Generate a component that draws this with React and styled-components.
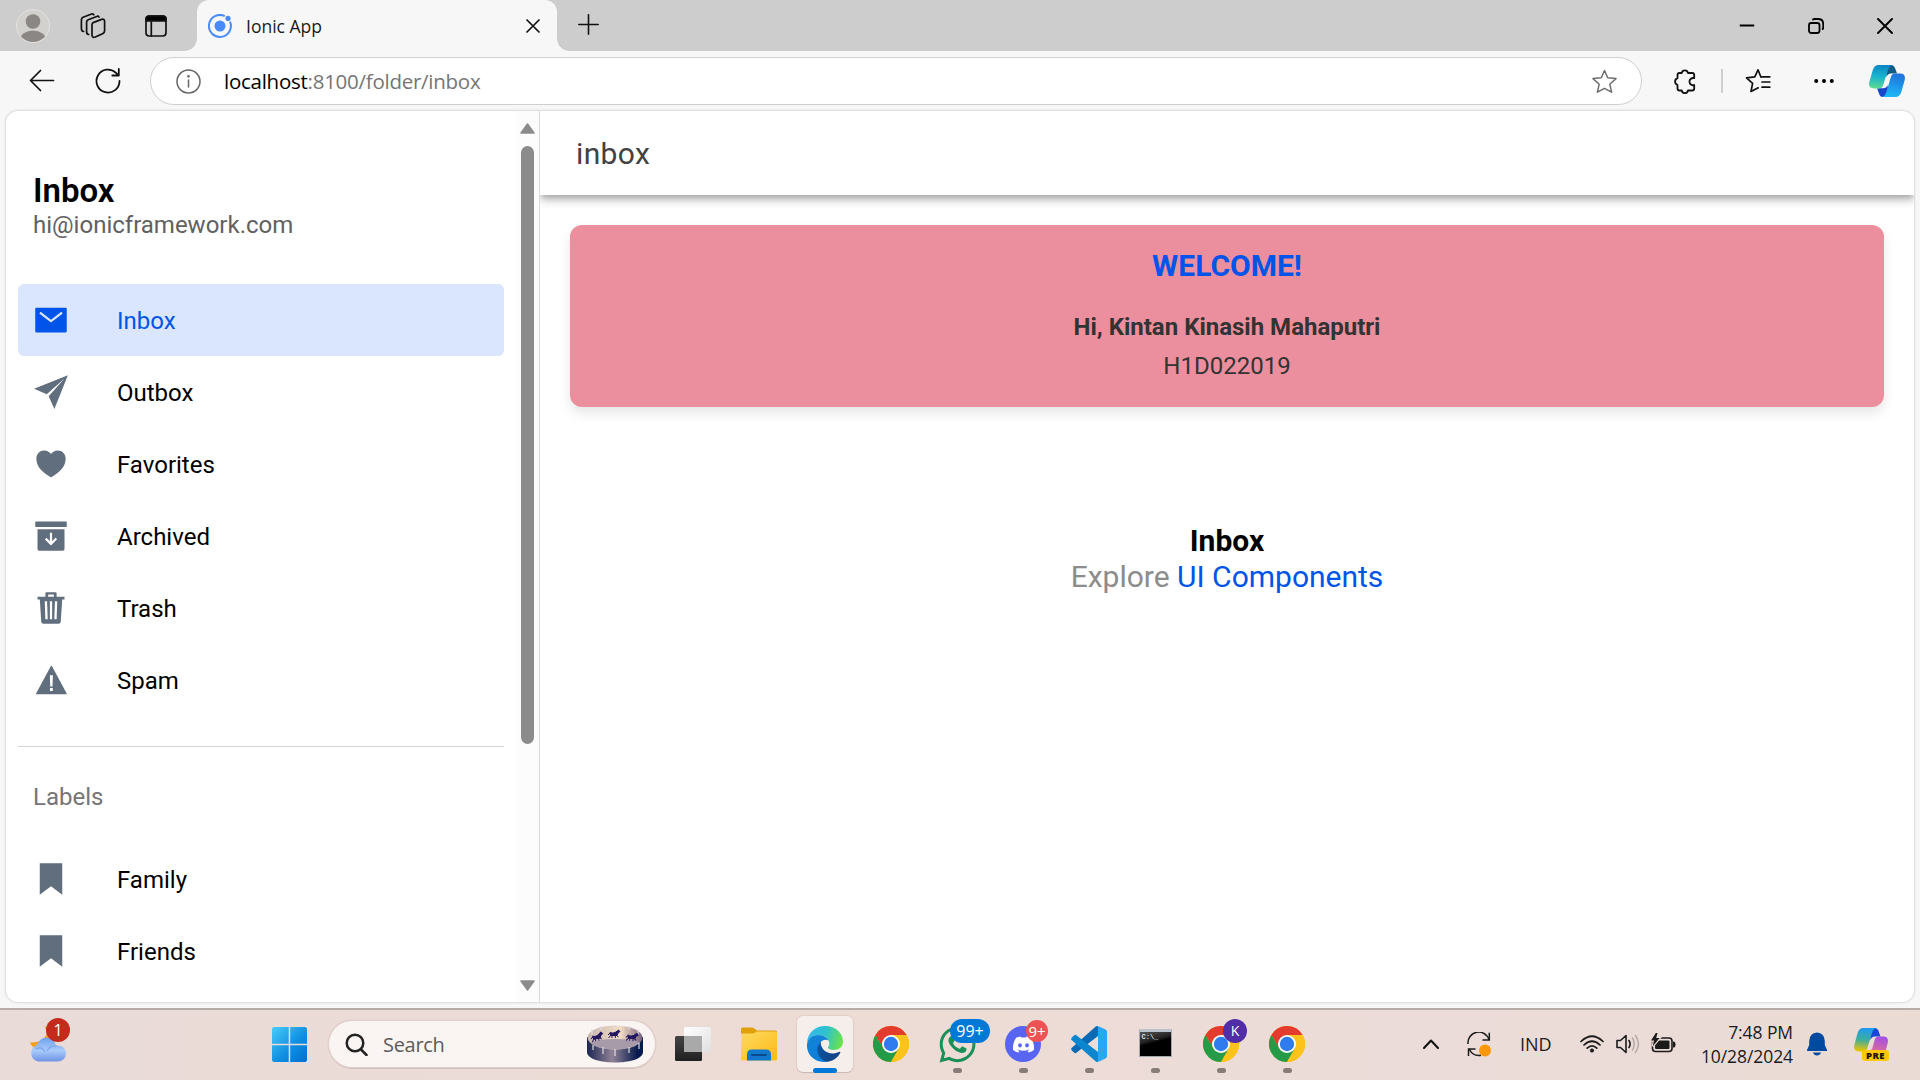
import React from "react";
import styled, { createGlobalStyle, css } from "styled-components";
import {
  IoMailSharp,
  IoPaperPlaneSharp,
  IoHeartSharp,
  IoArchiveSharp,
  IoTrashSharp,
  IoWarningSharp,
  IoBookmarkSharp,
} from "react-icons/io5";
import { FaDiscord, FaWhatsapp } from "react-icons/fa";

const segoe = css`
  font-family: "Open Sans", "Noto Sans", sans-serif;
`;

const GlobalStyle = createGlobalStyle`
  * { box-sizing: border-box; }
  body { margin: 0; overflow: hidden; background: #f7f7f7; font-family: Roboto, sans-serif; }
  h1, h2, p { margin: 0; }
  svg { display: block; flex: none; }
`;

const Screen = styled.div`
  width: 1920px;
  height: 1080px;
  display: flex;
  flex-direction: column;
  overflow: hidden;
`;

/* ---------- Browser chrome ---------- */

const TabStrip = styled.header`
  height: 51px;
  flex: none;
  display: flex;
  background: #cdcdcd;
`;

const StripTools = styled.div`
  width: 197px;
  display: flex;
  align-items: center;
  padding-left: 16px;
`;

const Tab = styled.div`
  position: relative;
  width: 360px;
  height: 51px;
  display: flex;
  align-items: center;
  padding: 0 17px 0 11px;
  background: #f7f7f7;
  border-radius: 12px 12px 0 0;
  &::before,
  &::after {
    content: "";
    position: absolute;
    bottom: 0;
    width: 12px;
    height: 12px;
  }
  &::before {
    left: -12px;
    background: radial-gradient(circle at 0 0, transparent 11.5px, #f7f7f7 12px);
  }
  &::after {
    right: -12px;
    background: radial-gradient(circle at 100% 0, transparent 11.5px, #f7f7f7 12px);
  }
`;

const TabTitle = styled.span`
  ${segoe}
  flex: 1;
  margin-left: 14px;
  font-size: 17.5px;
  letter-spacing: 0;
  color: #1b1b1b;
`;

const NewTab = styled.div`
  display: flex;
  align-items: center;
  margin-left: 21px;
  padding-bottom: 2px;
`;

const WindowControls = styled.div`
  display: flex;
  align-items: center;
  gap: 53px;
  margin-left: auto;
  padding-right: 27px;
`;

const Toolbar = styled.div`
  height: 60px;
  flex: none;
  display: flex;
  align-items: center;
  padding-left: 28px;
  background: #f7f7f7;
`;

const NavButtons = styled.div`
  width: 122px;
  display: flex;
  align-items: center;
  gap: 38px;
`;

const AddressBar = styled.div`
  width: 1492px;
  height: 48px;
  display: flex;
  align-items: center;
  padding: 0 24px 0 25px;
  background: #fff;
  border: 1.5px solid #cfcfcf;
  border-radius: 24px;
`;

const Url = styled.span`
  ${segoe}
  flex: 1;
  margin-left: 23px;
  font-size: 20.5px;
  letter-spacing: -0.26px;
  color: #757575;
  b { font-weight: 400; color: #000; }
`;

const ToolbarActions = styled.div`
  flex: 1;
  display: flex;
  align-items: center;
  padding-left: 30px;
`;

const Separator = styled.i`
  width: 2px;
  height: 24px;
  margin: 0 22px 0 24px;
  background: #cfcfcf;
`;

const Gap = styled.i`
  width: ${(p) => p.$w}px;
  flex: none;
`;

/* ---------- Web page ---------- */

const PageFrame = styled.div`
  height: 897px;
  flex: none;
  padding: 0 6px 6px;
  background: #f7f7f7;
`;

const Page = styled.div`
  height: 891px;
  display: flex;
  overflow: hidden;
  background: #fff;
  border-radius: 12px;
  box-shadow: 0 0 2px 1px rgba(0, 0, 0, 0.12);
`;

const Sidebar = styled.aside`
  width: 534px;
  flex: none;
  display: flex;
  border-right: 1px solid #dadada;
`;

const Menu = styled.nav`
  flex: 1;
  padding: 60px 12px 0;
`;

const MenuTitle = styled.h1`
  padding-left: 15px;
  font-size: 33px;
  line-height: 39px;
  font-weight: 600;
  color: #000;
`;

const MenuNote = styled.p`
  height: 74px;
  padding-left: 15px;
  font-size: 24px;
  line-height: 30px;
  color: #616161;
`;

const MenuGroup = styled.div`
  height: ${(p) => p.$height}px;
  border-bottom: ${(p) => (p.$divided ? "1px solid #d5d5d5" : "none")};
`;

const MenuItem = styled.div`
  height: 72px;
  display: flex;
  align-items: center;
  gap: 48px;
  padding-left: 15px;
  border-radius: 6px;
  font-size: 24px;
  line-height: 30px;
  color: ${(p) => (p.$selected ? "#0054e9" : "#000")};
  background: ${(p) => (p.$selected ? "#dae6fd" : "transparent")};
  svg { width: 36px; height: 36px; color: ${(p) => (p.$selected ? "#0054e9" : "#616e7e")}; }
  span { padding-top: 2px; }
`;

const LabelsHeader = styled.h2`
  height: 96px;
  padding: 34px 0 0 15px;
  font-size: 24px;
  line-height: 32px;
  font-weight: 400;
  color: #757575;
`;

const ScrollTrack = styled.div`
  width: 23px;
  display: flex;
  flex-direction: column;
  align-items: center;
  padding: 12px 0 11px;
  background: #fcfcfc;
`;

const ScrollThumb = styled.div`
  width: 13px;
  height: 598px;
  margin: 12px 0 auto;
  border-radius: 7px;
  background: #8b8b8b;
`;

const Main = styled.main`
  flex: 1;
  display: flex;
  flex-direction: column;
  overflow: hidden;
`;

const MainHeader = styled.div`
  height: 84px;
  flex: none;
  display: flex;
  align-items: center;
  padding-left: 36px;
  font-size: 30px;
  letter-spacing: 0.375px;
  color: #424242;
  background: #fff;
  box-shadow: 0 3px 6px -1.5px rgba(0, 0, 0, 0.2), 0 6px 7.5px 0 rgba(0, 0, 0, 0.14),
    0 1.5px 15px 0 rgba(0, 0, 0, 0.12);
`;

const WelcomeCard = styled.section`
  height: 182px;
  margin: 30px 30px 0;
  padding-top: 23px;
  text-align: center;
  color: #333;
  background: #eb8f9e;
  border-radius: 12px;
  box-shadow: 0 6px 12px rgba(0, 0, 0, 0.1);
`;

const WelcomeTitle = styled.h2`
  font-size: 30px;
  line-height: 36px;
  font-weight: 700;
  color: #0054e9;
`;

const WelcomeLine = styled.p`
  margin-top: ${(p) => p.$top}px;
  font-size: 24px;
  line-height: 28px;
  font-weight: ${(p) => (p.$strong ? 700 : 400)};
`;

const Explore = styled.section`
  margin-top: 115px;
  text-align: center;
  font-size: 30px;
  line-height: 36px;
  color: #8c8c8c;
  h2 { font-size: 30px; line-height: 38px; font-weight: 700; color: #000; }
  p { margin-top: -1px; }
  a { color: #0054e9; text-decoration: none; }
`;

/* ---------- Taskbar ---------- */

const Taskbar = styled.footer`
  ${segoe}
  height: 72px;
  flex: none;
  display: flex;
  align-items: center;
  padding-bottom: 2px;
  border-top: 2px solid #b8aca8;
  background: linear-gradient(90deg, #e9dbd8, #eddcd5 45%, #ecdcd9 75%, #eadbd4);
`;

const Slot = styled.div`
  position: relative;
  width: ${(p) => p.$w}px;
  height: ${(p) => p.$h || 56}px;
  flex: none;
  display: flex;
  align-items: center;
  justify-content: center;
`;

const AppSlot = styled(Slot)`
  border-radius: 6px;
  margin-right: 10px;
  background: ${(p) => (p.$active ? "#f6eeeb" : "transparent")};
  box-shadow: ${(p) => (p.$active ? "0 0 0 1px rgba(120,80,70,.08), 0 1px 1px rgba(0,0,0,.12)" : "none")};
`;

const Indicator = styled.i`
  position: absolute;
  bottom: -1px;
  width: ${(p) => (p.$active ? 24 : 9)}px;
  height: 5px;
  border-radius: 3px;
  background: ${(p) => (p.$active ? "#0078d7" : "#877c78")};
`;

const Badge = styled.span`
  position: absolute;
  left: ${(p) => p.$x}px;
  top: ${(p) => p.$y}px;
  width: ${(p) => p.$w || 24}px;
  height: ${(p) => p.$h || 24}px;
  display: flex;
  align-items: center;
  justify-content: center;
  border-radius: 12px;
  font-size: ${(p) => p.$size || 16}px;
  line-height: 24px;
  color: #fff;
  background: ${(p) => p.$bg};
`;

const SearchBox = styled.div`
  width: 326px;
  height: 46px;
  display: flex;
  align-items: center;
  margin: 0 10px 0 22px;
  padding: 0 12px 0 16px;
  border-radius: 23px;
  background: #faf5f3;
  box-shadow: 0 0 0 1.5px #e0d0cb, 0 2px 0 #bfb3af;
  font-size: 20px;
  color: #5c5a59;
  span { flex: 1; margin-left: 15px; letter-spacing: -0.3px; }
`;

const Tray = styled.div`
  flex: 1;
  display: flex;
  align-items: center;
  padding-left: 98px;
`;

const Language = styled.span`
  width: 60px;
  margin-left: 29px;
  font-size: 18px;
  color: #1b1b1b;
`;

const Clock = styled.div`
  width: 104px;
  margin-left: 13px;
  font-size: 17.5px;
  line-height: 24px;
  letter-spacing: -0.08px;
  text-align: right;
  white-space: nowrap;
  color: #1b1b1b;
`;

const PreBadge = styled.span`
  position: absolute;
  left: 8px;
  bottom: 0;
  width: 27px;
  height: 11px;
  border-radius: 3px;
  background: #ffc60a;
  color: #1b1200;
  font-size: 9.5px;
  line-height: 11px;
  font-weight: 800;
  letter-spacing: 0.5px;
  text-align: center;
`;

/* ---------- Drawings ---------- */

const Line = ({ w = 24, h = w, box, sw = 1.5, color = "#111", children }) => (
  <svg width={w} height={h} viewBox={box || `0 0 ${w} ${h}`} fill="none" stroke={color} strokeWidth={sw} strokeLinecap="round" strokeLinejoin="round">
    {children}
  </svg>
);

const Avatar = () => (
  <svg width="34" height="34" viewBox="0 0 34 34">
    <clipPath id="avatar"><circle cx="17" cy="17" r="16" /></clipPath>
    <circle cx="17" cy="17" r="16.5" fill="#d3d1ce" stroke="#e4e3e1" />
    <g clipPath="url(#avatar)" fill="#8b8784">
      <circle cx="17" cy="12.5" r="7.3" />
      <ellipse cx="17" cy="31" rx="13" ry="9.5" />
    </g>
  </svg>
);

const Workspaces = () => (
  <Line w={26} sw={1.7}>
    <path d="M13.2 9.6 L21.6 6.4 Q24.6 5.6 24.6 8.4 V17.8 Q24.6 19.6 23 20.4 L15.4 24 Q12 25.2 12 22 V11.8 Q12 10.2 13.2 9.6Z" />
    <path d="M8.7 21.5 Q6.6 21.5 6.6 18.5 V9.3 Q6.6 7.5 8.2 6.8 L17.4 3.2 Q18.6 3 19 4" />
    <path d="M3.6 18.5 Q1.4 18.2 1.4 15.5 V6.8 Q1.4 5 3 4.3 L11.6 1 Q13 .7 13.8 1.8" />
  </Line>
);

const TabActions = () => (
  <Line w={22} sw={1.7}>
    <rect x="1" y="1" width="20" height="20" rx="3.2" />
    <path d="M1 5.8V4.2A3.2 3.2 0 0 1 4.2 1h13.6A3.2 3.2 0 0 1 21 4.2v1.6z" fill="#000" />
    <path d="M6.3 7v14" />
  </Line>
);

const IonicLogo = () => (
  <svg width="24" height="24" viewBox="0 0 24 24">
    <circle cx="12" cy="12" r="5.5" fill="#4a8bfc" />
    <circle cx="20" cy="4.4" r="2.6" fill="#4a8bfc" />
    <path d="M16.8 2.1A11 11 0 1 0 22 7.6" fill="none" stroke="#4a8bfc" strokeWidth="2" />
  </svg>
);

const Copilot = ({ id, w, h, colors }) => (
  <svg width={w} height={h} viewBox="0 0 36 32" preserveAspectRatio="none">
    <defs>
      <linearGradient id={`${id}a`} x1=".4" y1="0" x2=".3" y2="1"><stop offset="0" stopColor={colors[0]} /><stop offset=".5" stopColor={colors[1]} /><stop offset="1" stopColor={colors[2]} /></linearGradient>
      <linearGradient id={`${id}b`} x1=".6" y1="0" x2=".4" y2="1"><stop offset="0" stopColor={colors[3]} /><stop offset="1" stopColor={colors[4]} /></linearGradient>
    </defs>
    <path d="M16 0H22Q25 0 26.2 3.5L28 8.5H22Q18.5 8.5 17.5 12Z" fill={colors[5]} />
    <path d="M20 32H14Q11 32 10 28.5L8 23.3H14Q17.5 23.3 18.5 20Z" fill={colors[6]} />
    <path d="M9.5 0H23.5Q20.5 .5 19 5L14 20.5Q13 23.5 9.5 23.5H5Q-1 23.5 .3 17L3.8 5Q5.5 0 9.5 0Z" fill={`url(#${id}a)`} />
    <path d="M26.5 32H13Q16 31.5 17.4 27L22 11.5Q23 8.4 26.5 8.4H31Q37 8.4 35.7 15L32.3 27Q30.7 32 26.5 32Z" fill={`url(#${id}b)`} />
  </svg>
);

const Weather = () => (
  <svg width="38" height="38" viewBox="0 0 38 38">
    <defs><linearGradient id="cloud" x1="0" y1="0" x2="0" y2="1"><stop offset="0" stopColor="#70a2ee" /><stop offset=".55" stopColor="#a9caf9" /><stop offset="1" stopColor="#6d93e6" /></linearGradient></defs>
    <path d="M15 1Q18.5 5 17 10.5Q13 18 1 17.5Q3 24 11 24L23 18Q26 6 15 1Z" fill="#f4a01c" />
    <path d="M9.5 36.5A8.5 8.5 0 0 1 8 20Q10 13 17.5 12.5Q25 13 27 20.5Q36.5 20 37 28.5Q36.5 36 29 36.5Z" fill="url(#cloud)" />
    <path d="M7 24Q13 21 16 27M18 26Q21 20 28 21" fill="none" stroke="#7da8ef" strokeWidth="1.2" />
  </svg>
);

const WindowsLogo = () => (
  <svg width="35" height="35" viewBox="0 0 35 35">
    <defs><linearGradient id="win" gradientUnits="userSpaceOnUse" x1="0" y1="0" x2="35" y2="35"><stop offset="0" stopColor="#49cdfb" /><stop offset=".55" stopColor="#1190e0" /><stop offset="1" stopColor="#006fd0" /></linearGradient></defs>
    <path d="M1.5 0H16.7V16.7H0V1.5ZM18.2 0H33.5L35 1.5V16.7H18.2ZM0 18.2H16.7V35H1.5L0 33.5ZM18.2 18.2H35V33.5L33.5 35H18.2Z" fill="url(#win)" />
  </svg>
);

const Horse = ({ x, y, r = 0 }) => (
  <g transform={`translate(${x} ${y}) rotate(${r})`} fill="#23155f" stroke="#23155f" strokeWidth="1">
    <path d="M-4 -1.5Q-1 0 2 -2L4.5 -4L6 -2.5L4 -1L3 1.5L-3.5 1.5Z" />
    <path d="M-3 1L-5.5 4M-2 1L-2 4M2 1L4.5 3M1 1L1.5 4M-4 -1L-6 1" fill="none" />
  </g>
);

const SearchArt = () => (
  <svg width="56" height="38" viewBox="0 0 56 38">
    <defs>
      <linearGradient id="drum"><stop offset="0" stopColor="#1c2552" /><stop offset=".45" stopColor="#8f8295" /><stop offset=".9" stopColor="#071b4e" /></linearGradient>
      <linearGradient id="drumIn"><stop offset="0" stopColor="#c5b6ae" /><stop offset=".6" stopColor="#f2dcc5" /><stop offset="1" stopColor="#77637c" /></linearGradient>
    </defs>
    <path d="M0 12V27C0 41 56 41 56 27V12Z" fill="url(#drum)" />
    <ellipse cx="28" cy="12.5" rx="27.5" ry="12" fill="url(#drumIn)" />
    <path d="M2.500 17.500Q12 14 28 14Q44 14 53.500 17.500Q46 24.500 28 24.500Q10 24.500 2.500 17.500Z" fill="#a79aa9" />
    <path d="M5 4V10M14 1V5M28 0V4M42 1V5M51 4V10M6 20V25M16 22V29M28 24V31M42 22V28M52 18V24" stroke="#e2dce2" strokeWidth="1.2" />
    <Horse x={10} y={12} r={-10} /><Horse x={27} y={9} /><Horse x={45} y={12} r={6} />
  </svg>
);

const TaskView = () => (
  <svg width="36" height="36" viewBox="0 0 36 36">
    <defs>
      <linearGradient id="tvd" x1="0" y1="0" x2="0" y2="1"><stop offset="0" stopColor="#444" /><stop offset="1" stopColor="#202020" /></linearGradient>
      <linearGradient id="tvl" x2="1" y2="1"><stop offset="0" stopColor="#fff" /><stop offset="1" stopColor="#e0e0e0" /></linearGradient>
    </defs>
    <rect x="0" y="10" width="27" height="25" rx="1.5" fill="url(#tvd)" />
    <rect x="9" y="1" width="27" height="25" rx="1.5" fill="url(#tvl)" />
    <path d="M9 10H27V26H10.5Q9 26 9 24.5Z" fill="#a9a9a9" />
  </svg>
);

const Explorer = () => (
  <svg width="36" height="34" viewBox="0 0 36 34">
    <defs><linearGradient id="fold" x2="1" y2="1"><stop offset="0" stopColor="#ffda62" /><stop offset="1" stopColor="#fcba14" /></linearGradient></defs>
    <path d="M0 2Q0 .5 1.5 .5H11Q12.5 .5 14 2L16 3.5H34.5Q36 3.5 36 5V12H0Z" fill="#dfa00c" />
    <path d="M0 6.5H11.5Q13 6.5 14.5 5.2L16 4.5H34.5Q36 4.5 36 6V32Q36 33.5 34.5 33.5H1.5Q0 33.5 0 32Z" fill="url(#fold)" />
    <path d="M6 33.5V27.5Q6 22.5 11 22.5H25Q30 22.5 30 27.5V33.5Z" fill="#1178cd" />
    <path d="M11 28H25" stroke="#0a4a8d" strokeWidth="1.8" strokeLinecap="round" />
  </svg>
);

const Edge = () => (
  <svg width="36" height="36" viewBox="0 0 36 36">
    <defs>
      <linearGradient id="eg" x1="0" y1=".3" x2="1" y2=".5"><stop offset="0" stopColor="#35b9ec" /><stop offset=".5" stopColor="#2ec2ce" /><stop offset="1" stopColor="#6ce24c" /></linearGradient>
      <linearGradient id="eb" x2=".6" y2="1"><stop offset="0" stopColor="#1486d4" /><stop offset="1" stopColor="#0b7ddb" /></linearGradient>
      <linearGradient id="ed" x2="1" y2="1"><stop offset="0" stopColor="#0b5aa8" /><stop offset="1" stopColor="#123f7f" /></linearGradient>
    </defs>
    <path d="M0 17C.5 6 9 0 18 0C29 0 36 7.5 36 15.5C36 21 32 24 27 24C23 24 21 22.8 21 21.5C21 20.5 22.3 20 22.3 17.5C22.3 12.5 17 9 11 9C5.5 9 1.5 12 0 17Z" fill="url(#eg)" />
    <path d="M0 18C1 12 5.5 9 11 9C17 9 21 12.5 21.5 14.5C19.5 12.8 13.5 14 11.5 19C9 26 14 34 21 35.6C10 38 -1 30 0 18Z" fill="url(#eb)" />
    <path d="M14 15.5C12.8 20 17 27.5 26 27.5C29 27.5 31 26.5 32.5 25.8Q33.8 25.5 33.2 27C30 32.5 25.5 35.5 20 35.8C12 34 8 24 11.5 18.5Q12.5 16.5 14 15.5Z" fill="url(#ed)" />
  </svg>
);

const Chrome = () => (
  <svg width="36" height="36" viewBox="0 0 36 36">
    <circle cx="18" cy="18" r="18" fill="#fcc31a" />
    <path d="M2.4 9A18 18 0 0 1 33.6 9H18L10 22Z" fill="#e33b2e" />
    <path d="M2.4 9A18 18 0 0 0 18 36L26 22.5L18 26L10.5 22.5Z" fill="#259b48" />
    <path d="M18 9H33.6A18 18 0 0 1 18 36L25.8 22.5Z" fill="#fcc31a" />
    <circle cx="18" cy="18" r="9" fill="#fff" />
    <circle cx="18" cy="18" r="7.2" fill="#2f7cee" />
  </svg>
);

const DiscordDisc = styled.div`
  width: 36px;
  height: 36px;
  display: flex;
  align-items: center;
  justify-content: center;
  border-radius: 50%;
  background: #5865f2;
`;

const VsCode = () => (
  <svg width="36" height="36" viewBox="0 0 36 36">
    <path d="M27 0L27 10L5 27Q4 27.5 3 26.5L.6 24.3Q-.3 23 .6 22L24.5 .8Q25.5 -.2 27 0Z" fill="#0a6ab5" />
    <path d="M27 36V26L5 9Q4 8.5 3 9.5L.6 11.7Q-.3 13 .6 14L24.5 35.2Q25.5 36.2 27 36Z" fill="#0c86cf" />
    <path d="M24.5 35.2Q27 36.5 27 34V2Q27 -.5 24.5 .8Q26 -.3 28 .4L34.5 3.5Q36 4.3 36 6V30Q36 31.7 34.5 32.5L28 35.6Q26 36.3 24.5 35.2Z" fill="#27a8f1" />
  </svg>
);

const TerminalBox = styled.div`
  width: 33px;
  height: 28px;
  margin-top: -2px;
  padding: 1px 0 0 2px;
  border: 1.5px solid #a5a9ae;
  border-top: 3px solid #bcc3ca;
  background: linear-gradient(165deg, #555 0, #222 35%, #000 45%);
  color: #ddd;
  font: 700 7px/9px "Liberation Mono", monospace;
`;

const ChevronUp = () => <Line w={16} h={10} sw={2}><path d="M1 9L8 1.5L15 9" /></Line>;

const Sync = () => (
  <svg width="24" height="25" viewBox="0 0 24 25" fill="none" stroke="#1b1b1b" strokeWidth="1.5">
    <path d="M1 12A10.8 10.8 0 0 1 22 7.5M22.3 .8V8H15.5M14 23.3Q6 24.5 2.5 17.5M1.5 24V17H8.5" />
    <circle cx="18" cy="18.5" r="6" fill="#fd9808" stroke="none" />
  </svg>
);

const Wifi = () => (
  <Line w={24} h={18} sw={1.7} color="#1b1b1b">
    <path d="M1 6.5Q12 -4 23 6.5M4 10Q12 2.5 20 10M7.2 13.2Q12 8.5 16.8 13.2" />
    <circle cx="12" cy="15.5" r="1.6" fill="#1b1b1b" strokeWidth="1" />
  </Line>
);

const Speaker = () => (
  <Line w={24} h={20} sw={1.6} color="#1b1b1b">
    <path d="M1 6.5H4.5L10 1.5V18.5L4.5 13.5H1Z" /><path d="M13 6.5Q15.2 10 13 13.5" />
    <path d="M16.5 4Q20 10 16.5 16M19.5 1.5Q25.5 10 19.5 18.5" stroke="#b8adaa" />
  </Line>
);

const Battery = () => (
  <svg width="25" height="22" viewBox="0 0 25 22">
    <rect x="1.500" y="5" width="19.500" height="13.500" rx="3" fill="none" stroke="#1b1b1b" strokeWidth="1.600" />
    <rect x="4" y="7.500" width="14.500" height="8.500" rx="1" fill="#1b1b1b" />
    <path d="M22 8.500H23Q24.500 9 24.500 11.500Q24.500 14 23 14.500H22Z" fill="#1b1b1b" />
    <path d="M4.800 0L0 7.500H3L1.800 13.200L8.600 5H5.200L6.500 0Z" fill="#1b1b1b" stroke="#ebdcd6" strokeWidth="2.400" paintOrder="stroke" />
  </svg>
);

const Bell = () => (
  <svg width="20" height="24" viewBox="0 0 20 24" fill="#004a9f">
    <path d="M10 .5Q17.5 1 17.8 9V13L20 18V19H0V18L2.2 13V9Q2.5 1 10 .5Z" />
    <path d="M6 20.5H14Q13 23.5 10 23.5Q7 23.5 6 20.5Z" />
  </svg>
);

/* ---------- Data ---------- */

const folders = [
  ["Inbox", IoMailSharp],
  ["Outbox", IoPaperPlaneSharp],
  ["Favorites", IoHeartSharp],
  ["Archived", IoArchiveSharp],
  ["Trash", IoTrashSharp],
  ["Spam", IoWarningSharp],
];

const labels = ["Family", "Friends"];

const apps = [
  { icon: <TaskView /> },
  { icon: <Explorer /> },
  { icon: <Edge />, active: true, running: true },
  { icon: <Chrome /> },
  { icon: <FaWhatsapp size={41} color="#1b8f58" />, running: true, badge: { text: "99+", $x: 21, $y: 3, $w: 40, $bg: "#0078d7" } },
  { icon: <DiscordDisc><FaDiscord size={23} color="#fff" /></DiscordDisc>, running: true, badge: { text: "9+", $x: 31, $y: 4, $w: 22, $h: 22, $bg: "#ee5353", $size: 15 } },
  { icon: <VsCode />, running: true },
  { icon: <TerminalBox>C:\_</TerminalBox>, running: true },
  { icon: <Chrome />, running: true, badge: { text: "K", $x: 30, $y: 3, $bg: "#512da8", $size: 14 } },
  { icon: <Chrome />, running: true },
];

export default function App() {
  return (
    <Screen>
      <GlobalStyle />
      <TabStrip>
        <StripTools>
          <Avatar /><Gap $w={30} /><Workspaces /><Gap $w={39} /><TabActions />
        </StripTools>
        <Tab>
          <IonicLogo />
          <TabTitle>Ionic App</TabTitle>
          <Line w={14} sw={1.7}><path d="M1 1L13 13M13 1L1 13" /></Line>
        </Tab>
        <NewTab><Line w={21} sw={1.6}><path d="M10.5 .8V20.2M.8 10.5H20.2" /></Line></NewTab>
        <WindowControls>
          <Line w={16} sw={2} color="#000"><path d="M.8 7.5H15.2" strokeLinecap="butt" /></Line>
          <Line w={16} sw={1.8} color="#000"><rect x="1" y="5" width="10.5" height="10" rx="2.2" /><path d="M5 1.5Q5.5 1 6.5 1H10Q15.2 1 15.2 6V9.5Q15.2 10.5 14.7 11" /></Line>
          <Line w={16} sw={1.9} color="#000"><path d="M1 1L15 15M15 1L1 15" /></Line>
        </WindowControls>
      </TabStrip>

      <Toolbar>
        <NavButtons>
          <Line w={28} sw={1.7}><path d="M25.5 13.5H3M12.5 3.5L2.5 13.5L12.5 23.5" /></Line>
          <Line w={28} sw={1.8}><path d="M25.5 14A11.5 11.5 0 1 1 22 5.8L24.5 8.5M24.8 2V8.5H18.3" /></Line>
        </NavButtons>
        <AddressBar>
          <Line w={25} color="#666"><circle cx="12.5" cy="12.5" r="11.5" /><path d="M12.5 11V18" /><circle cx="12.5" cy="7.3" r=".6" fill="#666" /></Line>
          <Url><b>localhost</b>:8100/folder/inbox</Url>
          <Line w={25} sw={1.5} color="#6e6e6e"><path d="M12.5 1.5L15.7 8.8L24 9.6L17.8 15.2L19.6 23.2L12.5 19.3L5.4 23.2L7.2 15.2L1 9.6L9.3 8.8Z" /></Line>
        </AddressBar>
        <ToolbarActions>
          <Line w={25} sw={1.8}><path d="M8.5 4H9.7A3.2 3.2 0 0 1 16 4H20.2Q22.2 4 22.2 6V9.2A3.6 3.6 0 1 0 22.2 16V19.5Q22.2 21.5 20.2 21.5H16A3.2 3.2 0 0 1 9.7 21.5H7.5Q5.5 21.5 5.5 19.5V16A3.6 3.6 0 0 1 5.5 9.2V6Q5.5 4 7.5 4Z" /></Line>
          <Separator />
          <Line w={26} sw={1.7}><path d="M16 9.2L13 1.8L9.8 8.9L1.5 9.8L7.6 15.3L6 23.5L13.2 19.8M17 8.8H24.8M17 14H24.8M17 19.2H24.8" /></Line>
          <Gap $w={43} />
          <svg width="20" height="6" viewBox="0 0 20 6"><circle cx="2.2" cy="3" r="2" /><circle cx="10" cy="3" r="2" /><circle cx="17.8" cy="3" r="2" /></svg>
          <Gap $w={35} />
          <Copilot id="edge" w={36} h={32} colors={["#0c86c4", "#18b5cf", "#5fd98c", "#2072dc", "#1cb9f7", "#0f5c86", "#1947cc"]} />
        </ToolbarActions>
      </Toolbar>

      <PageFrame>
        <Page>
          <Sidebar>
            <Menu>
              <MenuTitle>Inbox</MenuTitle>
              <MenuNote>hi@ionicframework.com</MenuNote>
              <MenuGroup $height={463} $divided>
                {folders.map(([name, Icon], i) => (
                  <MenuItem key={name} $selected={i === 0}><Icon /><span>{name}</span></MenuItem>
                ))}
              </MenuGroup>
              <LabelsHeader>Labels</LabelsHeader>
              {labels.map((name) => (
                <MenuItem key={name}><IoBookmarkSharp /><span>{name}</span></MenuItem>
              ))}
            </Menu>
            <ScrollTrack>
              <svg width="15" height="11" viewBox="0 0 15 11"><path d="M7.5 1L14 10H1Z" fill="#8b8b8b" stroke="#8b8b8b" strokeWidth="1.5" strokeLinejoin="round" /></svg>
              <ScrollThumb />
              <svg width="15" height="11" viewBox="0 0 15 11"><path d="M7.5 10L14 1H1Z" fill="#8b8b8b" stroke="#8b8b8b" strokeWidth="1.5" strokeLinejoin="round" /></svg>
            </ScrollTrack>
          </Sidebar>
          <Main>
            <MainHeader>inbox</MainHeader>
            <WelcomeCard>
              <WelcomeTitle>WELCOME!</WelcomeTitle>
              <WelcomeLine $strong $top={29}>Hi, Kintan Kinasih Mahaputri</WelcomeLine>
              <WelcomeLine $top={11}>H1D022019</WelcomeLine>
            </WelcomeCard>
            <Explore>
              <h2>Inbox</h2>
              <p>Explore <a>UI Components</a></p>
            </Explore>
          </Main>
        </Page>
      </PageFrame>

      <Taskbar>
        <Slot $w={95}>
          <Weather />
          <Badge $x={46} $y={2} $bg="#c42b1c">1</Badge>
        </Slot>
        <Gap $w={177} />
        <WindowsLogo />
        <SearchBox>
          <Line w={23} sw={2.5} color="#222"><circle cx="10" cy="10" r="8.3" /><path d="M16 16.5L21.5 22" /></Line>
          <span>Search</span>
          <SearchArt />
        </SearchBox>
        {apps.map((app, i) => (
          <AppSlot key={i} $w={56} $active={app.active}>
            {app.icon}
            {app.badge && <Badge {...app.badge}>{app.badge.text}</Badge>}
            {app.running && <Indicator $active={app.active} />}
          </AppSlot>
        ))}
        <Tray>
          <ChevronUp />
          <Gap $w={28} />
          <Sync />
          <Language>IND</Language>
          <Wifi />
          <Gap $w={12} />
          <Speaker />
          <Gap $w={11} />
          <Battery />
          <Clock>7:48 PM<br />10/28/2024</Clock>
          <Gap $w={14} />
          <Bell />
          <Gap $w={27} />
          <Slot $w={34} $h={34}>
            <Copilot id="pre" w={34} h={32} colors={["#1e9af0", "#3fae9c", "#f2c500", "#a34fe8", "#fb7d6a", "#1647d8", "#f0a03c"]} />
            <PreBadge>PRE</PreBadge>
          </Slot>
        </Tray>
      </Taskbar>
    </Screen>
  );
}
